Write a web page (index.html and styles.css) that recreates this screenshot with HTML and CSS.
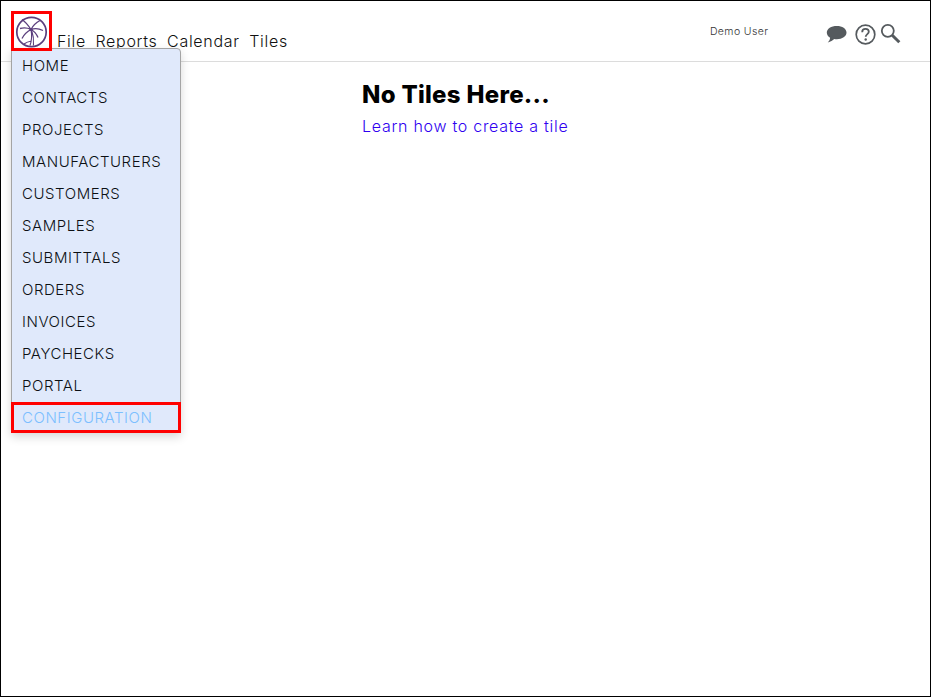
FILE: index.html
```html
<!DOCTYPE html>
<html lang="en">
<head>
<meta charset="utf-8">
<title>No Tiles Here</title>
<link rel="stylesheet" href="styles.css">
</head>
<body>
<div class="frame">
  <header class="topbar">
    <a class="logo" href="#" aria-label="Home">
      <svg width="33" height="33" viewBox="0 0 33 33" fill="none" stroke="#5b3f7d">
        <circle cx="16.500" cy="17" r="14.700" stroke-width="1.700"/>
        <path d="M16 14.500 C13 10 10 6.500 7 4.500 M16 14.500 C18 10.500 21 7.500 25 5.500 M16 14.500 C12 12.500 9 12.500 5 13.500 M16 14.500 C20 13 24 13.500 28 15.500 M16 14.500 C12 16.500 9 19.500 7 23.500 M16 14.500 C19 16 21.500 19 23 22.500" stroke-width="1.300"/>
        <path d="M16 14.500 C17 20 17 25 15 30.500 M18.500 30.500 C19 25 18 19 16.500 14.500 M9 29 C11 27.500 13.500 26.500 16.500 26" stroke-width="1.100"/>
        <circle cx="16" cy="14.500" r="1.500" fill="#5b3f7d" stroke="none"/>
      </svg>
    </a>
    <nav class="mainnav">
      <a href="#">File</a>
      <a href="#">Reports</a>
      <a href="#">Calendar</a>
      <a href="#">Tiles</a>
    </nav>
    <div class="username">Demo User</div>
    <div class="tools">
      <svg class="icon-chat" width="21" height="19" viewBox="0 0 21 19" fill="#555a5e">
        <path d="M10.800 1 C16.300 1 20.500 3.700 20.500 7.600 C20.500 11.500 16.300 14.300 10.800 14.300 C9.900 14.300 9 14.200 8.200 14.100 C6.700 15.600 4.700 16.800 1.800 17.400 C3.300 15.900 4 14.500 4.100 12.800 C2 11.600 0.800 9.800 0.800 7.600 C0.800 3.700 5.200 1 10.800 1 Z"/>
      </svg>
      <svg class="icon-help" width="21" height="21" viewBox="0 0 21 21" fill="none" stroke="#555a5e">
        <circle cx="10.500" cy="10.500" r="9.300" stroke-width="1.700"/>
        <path d="M7.200 8.200 C7.200 6 8.700 4.900 10.500 4.900 C12.400 4.900 13.800 6.100 13.800 7.800 C13.800 10 10.700 10.200 10.700 12.800" stroke-width="1.800"/>
        <circle cx="10.700" cy="15.500" r="1.200" fill="#555a5e" stroke="none"/>
      </svg>
      <svg class="icon-search" width="21" height="21" viewBox="0 0 21 21" fill="none" stroke="#555a5e">
        <circle cx="7.800" cy="7.800" r="6" stroke-width="1.800"/>
        <path d="M12 12 L19.300 19.300" stroke-width="3"/>
      </svg>
    </div>
  </header>

  <ul class="sidemenu">
    <li>HOME</li>
    <li>CONTACTS</li>
    <li>PROJECTS</li>
    <li>MANUFACTURERS</li>
    <li>CUSTOMERS</li>
    <li>SAMPLES</li>
    <li>SUBMITTALS</li>
    <li>ORDERS</li>
    <li>INVOICES</li>
    <li>PAYCHECKS</li>
    <li>PORTAL</li>
    <li class="active">CONFIGURATION</li>
  </ul>

  <main class="content">
    <h1>No Tiles Here...</h1>
    <a class="learn" href="#">Learn how to create a tile</a>
  </main>
</div>
</body>
</html>
```
FILE: styles.css
```css
* { box-sizing: border-box; }
html, body { margin: 0; height: 100%; background: #fff; }
body { font-family: "Inter", "Open Sans", "Liberation Sans", sans-serif; color: #222; overflow: hidden; }
a { text-decoration: none; color: inherit; }

.frame { position: relative; height: 697px; border: 1px solid #000; }

.topbar {
  display: flex;
  align-items: flex-start;
  height: 61px;
  padding: 10px 0 0 10px;
  border-bottom: 1px solid #dcdcdc;
}
.logo {
  position: relative;
  z-index: 2;
  display: flex;
  align-items: center;
  justify-content: center;
  width: 41px;
  height: 40px;
  border: 3px solid #f00;
  flex: none;
}
.mainnav {
  display: flex;
  gap: 9.500px;
  margin: 20px 0 0 5px;
  font-size: 16px;
  line-height: 20px;
  font-weight: 350;
  color: #111;
  letter-spacing: 0.7px;
}
.username {
  margin: 14px 0 0 422px;
  width: 116px;
  font-size: 10.500px;
  line-height: 13px;
  font-weight: 350;
  color: #333;
  letter-spacing: 0.4px;
}
.tools { position: relative; display: flex; align-items: flex-start; }
.icon-chat { margin-top: 14px; }
.icon-help { margin: 13px 0 0 8px; }
.icon-search { margin: 12px 0 0 4px; }

.sidemenu {
  position: absolute;
  left: 10px;
  top: 47px;
  width: 170px;
  margin: 0;
  padding: 1px 0 0;
  list-style: none;
  background: #e0e9fb;
  border: 1px solid #a4a4a4;
  border-radius: 0 4px 0 0;
  box-shadow: 0 4px 10px rgba(0, 0, 0, 0.16);
  font-size: 15px;
  font-weight: 350;
  color: #0c1014;
}
.sidemenu li {
  height: 32px;
  line-height: 32px;
  padding-left: 10px;
  letter-spacing: 0.55px;
}
.sidemenu .active {
  margin: 0 -1px -1px;
  height: 31px;
  line-height: 25px;
  padding-left: 8px;
  border: 3px solid #f00;
  color: #7cbfff;
}

.content { padding: 18px 0 0 361px; }
.content h1 {
  margin: 0;
  font-size: 24px;
  line-height: 30px;
  font-weight: 800;
  letter-spacing: 0.3px;
  color: #000;
}
.learn {
  display: block;
  margin-top: 5px;
  font-size: 16px;
  line-height: 22px;
  font-weight: 350;
  color: #2f00f0;
  letter-spacing: 0.72px;
}
```
